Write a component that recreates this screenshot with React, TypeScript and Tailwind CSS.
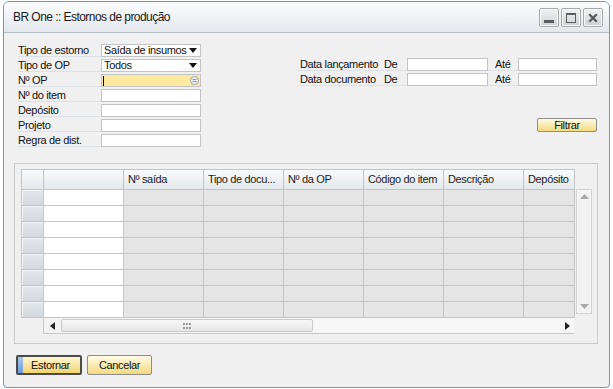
import React from "react";

const font = { fontFamily: '"Liberation Sans", Arial, sans-serif', letterSpacing: "-0.35px" };

function LabelCell({ children, w, pl = "pl-0" }: { children?: React.ReactNode; w: string; pl?: string }) {
  return (
    <div className={`${w} ${pl} h-[14px] border-b border-[#dde0e4] pt-[1px] text-[11px] leading-[13px] text-[#111] whitespace-nowrap overflow-hidden`}>
      {children}
    </div>
  );
}

function Arrow() {
  return (
    <svg width="8" height="5" viewBox="0 0 8 5" className="shrink-0">
      <path d="M0 0 H8 L4 5 Z" fill="#111" />
    </svg>
  );
}

function Field({ children, className = "" }: { children?: React.ReactNode; className?: string }) {
  return (
    <div className={`mt-[1px] h-[13px] border border-[#c4c4c4] flex items-center text-[11px] leading-[11px] text-[#111] whitespace-nowrap ${className}`}>
      {children}
    </div>
  );
}

function WinBtn({ kind }: { kind: "min" | "max" | "close" }) {
  return (
    <div className="w-[20px] h-[19px] rounded-[2px] border border-[#a7a9ad] bg-gradient-to-b from-[#f2f2f2] to-[#cfd1d4] shadow-[inset_0_0_0_1px_#f8f8f8] flex items-center justify-center">
      {kind === "min" && (
        <svg width="12" height="12" viewBox="0 0 12 12">
          <rect x="1" y="8" width="10" height="3" fill="#5a5c60" />
        </svg>
      )}
      {kind === "max" && (
        <svg width="12" height="12" viewBox="0 0 12 12">
          <rect x="1.5" y="1.5" width="9" height="9" fill="none" stroke="#5a5c60" strokeWidth="1" />
          <rect x="1" y="1" width="10" height="2" fill="#5a5c60" />
        </svg>
      )}
      {kind === "close" && (
        <svg width="12" height="12" viewBox="0 0 12 12">
          <path d="M3 3 L9 9 M9 3 L3 9" stroke="#55575b" strokeWidth="2.2" strokeLinecap="square" />
        </svg>
      )}
    </div>
  );
}

const cols = ["Nº saída", "Tipo de docu...", "Nº da OP", "Código do item", "Descrição"];

export default function App() {
  const rows = Array.from({ length: 8 });
  return (
    <div className="w-[613px] h-[389px] bg-white pt-[1px] pl-[3px]" style={font}>
      <div className="w-[607px] h-[387px] border border-[#6497dd] rounded-t-[6px] rounded-b-[4px] overflow-hidden bg-[#f0f0f0] flex flex-col">
        {/* Title bar */}
        <div className="h-[31px] shrink-0 border-b border-[#b8bec6] bg-gradient-to-b from-[#fbfcfd] to-[#e4e8ed] flex items-center pl-[9px] pr-[6px]">
          <div className="text-[12px] text-[#1a1a1a] tracking-[-0.55px]">BR One :: Estornos de produção</div>
          <div className="ml-auto flex gap-[2px] pt-[1px]">
            <WinBtn kind="min" />
            <WinBtn kind="max" />
            <WinBtn kind="close" />
          </div>
        </div>

        {/* Top section */}
        <div className="h-[130px] shrink-0 flex pl-[14px]">
          {/* left form */}
          <div className="pt-[10px] flex flex-col">
            <div className="flex h-[15px]">
              <LabelCell w="w-[83px]">Tipo de estorno</LabelCell>
              <Field className="w-[100px] pl-[2px] pr-[3px] bg-white">
                <span>Saída de insumos</span>
                <span className="ml-auto"><Arrow /></span>
              </Field>
            </div>
            <div className="flex h-[15px]">
              <LabelCell w="w-[83px]">Tipo de OP</LabelCell>
              <Field className="w-[100px] pl-[2px] pr-[3px] bg-white">
                <span>Todos</span>
                <span className="ml-auto"><Arrow /></span>
              </Field>
            </div>
            <div className="flex h-[15px]">
              <LabelCell w="w-[83px]">Nº OP</LabelCell>
              <Field className="w-[100px] pl-[1px] pr-[1px] bg-[#fde9a0]">
                <span className="w-[1px] h-[10px] bg-black" />
                <span className="ml-auto flex">
                  <svg width="9" height="9" viewBox="0 0 9 9">
                    <circle cx="4.5" cy="4.5" r="4" fill="#e9edf2" stroke="#9aa6b4" strokeWidth="1" />
                    <path d="M2.5 3.5 H6.5 M2.5 5.5 H6.5" stroke="#8793a2" strokeWidth="0.9" />
                  </svg>
                </span>
              </Field>
            </div>
            <div className="flex h-[15px]">
              <LabelCell w="w-[83px]">Nº do item</LabelCell>
              <Field className="w-[100px] bg-white" />
            </div>
            <div className="flex h-[15px]">
              <LabelCell w="w-[83px]">Depósito</LabelCell>
              <Field className="w-[100px] bg-white" />
            </div>
            <div className="flex h-[15px]">
              <LabelCell w="w-[83px]">Projeto</LabelCell>
              <Field className="w-[100px] bg-white" />
            </div>
            <div className="flex h-[15px]">
              <LabelCell w="w-[83px]">Regra de dist.</LabelCell>
              <Field className="w-[100px] bg-white" />
            </div>
          </div>

          {/* right form */}
          <div className="ml-[96px] w-[300px] pt-[24px] flex flex-col">
            <div className="flex h-[15px]">
              <LabelCell w="w-[84px]" pl="pl-[3px]">Data lançamento</LabelCell>
              <LabelCell w="w-[26px]" pl="pl-[3px]">De</LabelCell>
              <Field className="w-[81px] bg-white" />
              <LabelCell w="w-[30px]" pl="pl-[7px]">Até</LabelCell>
              <Field className="w-[79px] bg-white" />
            </div>
            <div className="flex h-[15px]">
              <LabelCell w="w-[84px]" pl="pl-[3px]">Data documento</LabelCell>
              <LabelCell w="w-[26px]" pl="pl-[3px]">De</LabelCell>
              <Field className="w-[81px] bg-white" />
              <LabelCell w="w-[30px]" pl="pl-[7px]">Até</LabelCell>
              <Field className="w-[79px] bg-white" />
            </div>
            <div className="mt-[31px] ml-auto w-[60px] h-[14px] rounded-[2px] border border-[#8e8e8e] bg-gradient-to-b from-[#fffbe6] to-[#f4d97c] flex items-center justify-center text-[11px] text-[#111]">
              Filtrar
            </div>
          </div>
        </div>

        {/* Grid box */}
        <div className="ml-[10px] w-[584px] h-[181px] shrink-0 border border-[#c9c9c9] pl-[6px] pt-[5px]">
          <div className="flex">
            <div className="flex flex-col">
              <div className="border-l border-t border-[#c4c4c4]">
                {/* header */}
                <div className="flex h-[20px]">
                  <div className="w-[22px] border-r border-b border-[#c4c4c4] bg-gradient-to-b from-[#f8f9fa] to-[#e5e8eb]" />
                  <div className="w-[80px] border-r border-b border-[#c4c4c4] bg-gradient-to-b from-[#f8f9fa] to-[#e5e8eb]" />
                  {cols.map((c) => (
                    <div key={c} className="w-[80px] border-r border-b border-[#c4c4c4] bg-gradient-to-b from-[#f8f9fa] to-[#e5e8eb] pl-[4px] pt-[3px] text-[11px] leading-[12px] text-[#1c1c1c] whitespace-nowrap overflow-hidden">
                      {c}
                    </div>
                  ))}
                  <div className="w-[51px] border-r border-b border-[#c4c4c4] bg-gradient-to-b from-[#f8f9fa] to-[#e5e8eb] pl-[4px] pt-[3px] text-[11px] leading-[12px] text-[#1c1c1c] whitespace-nowrap overflow-hidden">
                    Depósito
                  </div>
                </div>
                {rows.map((_, i) => (
                  <div key={i} className="flex h-[16px]">
                    <div className="w-[22px] border-r border-b border-[#c4c4c4] bg-gradient-to-b from-[#e3e7eb] to-[#d2d8de] shadow-[inset_1px_1px_0_#f3f5f7]" />
                    <div className="w-[80px] border-r border-b border-[#c4c4c4] bg-white" />
                    {cols.map((c) => (
                      <div key={c} className="w-[80px] border-r border-b border-[#c4c4c4] bg-[#e5e5e5]" />
                    ))}
                    <div className="w-[51px] border-r border-b border-[#c4c4c4] bg-[#e5e5e5]" />
                  </div>
                ))}
              </div>
              {/* horizontal scrollbar */}
              <div className="ml-[22px] w-[531px] h-[16px] border-l border-b border-[#c8c8c8] bg-[#f6f6f6] flex items-stretch">
                <div className="w-[17px] flex items-center justify-center bg-[#f3f3f3]">
                  <svg width="5" height="8" viewBox="0 0 5 8"><path d="M5 0 V8 L0 4 Z" fill="#222" /></svg>
                </div>
                <div className="w-[252px] my-[1px] rounded-[2px] border border-[#c9c9c9] bg-gradient-to-b from-[#f7f7f7] to-[#e6e6e6] flex items-center justify-center">
                  <svg width="8" height="6" viewBox="0 0 8 6">
                    <g fill="#9a9a9a">
                      <rect x="0" y="0" width="2" height="2" /><rect x="3" y="0" width="2" height="2" /><rect x="6" y="0" width="2" height="2" />
                      <rect x="0" y="4" width="2" height="2" /><rect x="3" y="4" width="2" height="2" /><rect x="6" y="4" width="2" height="2" />
                    </g>
                  </svg>
                </div>
                <div className="flex-1" />
                <div className="w-[14px] flex items-center justify-center">
                  <svg width="5" height="8" viewBox="0 0 5 8"><path d="M0 0 V8 L5 4 Z" fill="#222" /></svg>
                </div>
              </div>
            </div>
            {/* vertical scrollbar */}
            <div className="mt-[20px] ml-[1px] w-[16px] h-[125px] border border-[#d4d4d4] bg-[#f3f3f3] flex flex-col items-center justify-between py-[4px]">
              <svg width="9" height="5" viewBox="0 0 9 5"><path d="M0 5 H9 L4.5 0 Z" fill="#a8a8a8" /></svg>
              <svg width="9" height="5" viewBox="0 0 9 5"><path d="M0 0 H9 L4.5 5 Z" fill="#a8a8a8" /></svg>
            </div>
          </div>
        </div>

        {/* Bottom buttons */}
        <div className="mt-[11px] ml-[12px] flex gap-[5px]">
          <div className="w-[66px] h-[20px] rounded-[2px] border-2 border-[#4a4a4a] bg-gradient-to-b from-[#fff6cf] to-[#f2d36c] flex items-stretch overflow-hidden">
            <div className="w-[5px] bg-gradient-to-b from-[#a9c8ec] to-[#6e9bd6]" />
            <div className="flex-1 flex items-center justify-center text-[11px] text-[#111] pr-[2px]">Estornar</div>
          </div>
          <div className="w-[65px] h-[20px] rounded-[2px] border border-[#8e8e8e] bg-gradient-to-b from-[#fffbe6] to-[#f4d97c] flex items-center justify-center text-[11px] text-[#111]">
            Cancelar
          </div>
        </div>
      </div>
    </div>
  );
}
